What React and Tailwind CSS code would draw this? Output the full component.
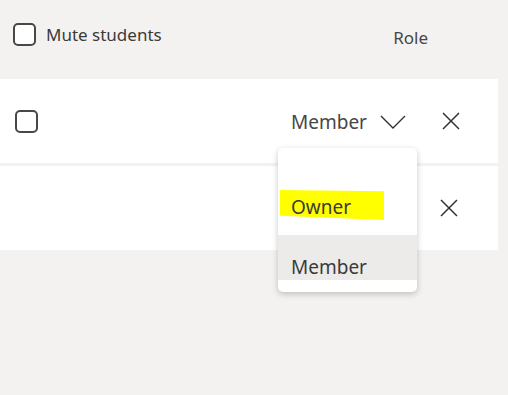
import React from "react";

const Box = ({ className = "" }) => (
  <div className={`w-[23px] h-[23px] rounded-[5px] border-2 border-[#4a4846] bg-white ${className}`} />
);

const Chevron = () => (
  <svg width="26" height="16" viewBox="0 0 26 16" fill="none" stroke="#323130" strokeWidth="1.4">
    <path d="M1 2 L13 14 L25 2" />
  </svg>
);

const Close = () => (
  <svg width="18" height="18" viewBox="0 0 18 18" fill="none" stroke="#323130" strokeWidth="1.5">
    <path d="M1 1 L17 17 M17 1 L1 17" />
  </svg>
);

export default function App() {
  return (
    <div
      className="relative w-[508px] h-[395px] bg-[#f3f2f1] overflow-hidden text-[#323130]"
      style={{ fontFamily: '"Segoe UI", "Noto Sans", sans-serif' }}
    >
      <div className="h-[79px] flex items-start pt-[23px] pl-[13px]">
        <Box className="bg-transparent" />
        <span className="ml-[10px] text-[17px] leading-[23px] text-[#3b3a39]">Mute students</span>
        <span className="ml-auto mr-[80px] mt-[3px] text-[17px] leading-[23px] text-[#484644]">Role</span>
      </div>

      <div className="w-[498px] flex flex-col gap-[3px]">
        <div className="h-[84px] bg-white flex items-center pl-[15px]">
          <Box />
          <span className="ml-[253px] mt-[2px] text-[19px] text-[#484644]">Member</span>
          <span className="ml-[13px] mt-[2px]"><Chevron /></span>
          <span className="ml-[36px]"><Close /></span>
        </div>
        <div className="h-[84px] bg-white flex items-center justify-end pr-[40px]">
          <Close />
        </div>
      </div>

      <div className="absolute left-[278px] top-[148px] w-[139px] h-[144px] bg-white rounded-[5px] shadow-[0_2px_6px_rgba(0,0,0,0.22)] overflow-hidden flex flex-col">
        <div className="h-[87px] relative">
          <div className="absolute left-[2px] top-[42px] w-[104px] h-[30px] bg-[#ffff00] [clip-path:polygon(0_0,100%_4%,100%_100%,0_86%)]" />
          <span className="absolute left-[13px] top-[47px] text-[19px] leading-[24px] text-[#3b3a39]">Owner</span>
        </div>
        <div className="h-[45px] bg-[#edebe9] relative">
          <span className="absolute left-[13px] top-[20px] text-[19px] leading-[24px] text-[#3b3a39]">Member</span>
        </div>
      </div>
    </div>
  );
}
